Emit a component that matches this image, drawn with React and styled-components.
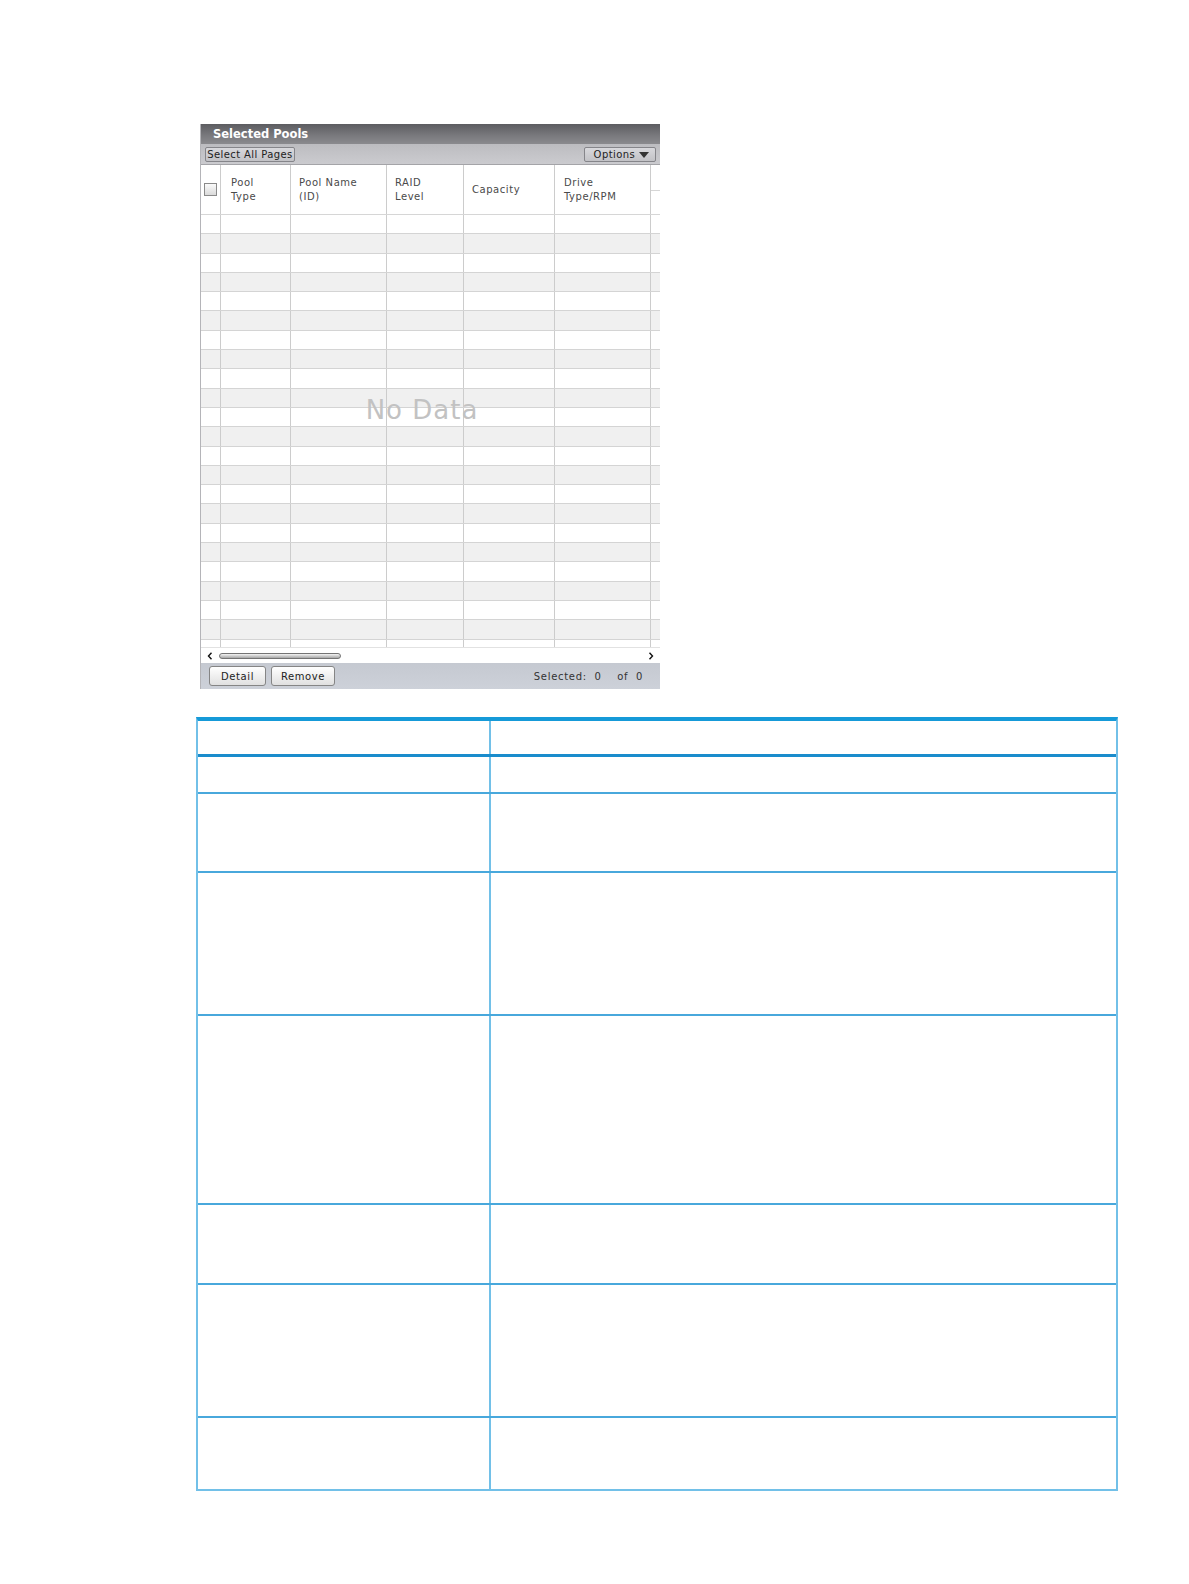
import React from "react";
import styled, { createGlobalStyle } from "styled-components";

const Global = createGlobalStyle`
  html, body { margin: 0; padding: 0; background: #ffffff; }
  body { font-family: "DejaVu Sans", Verdana, sans-serif; }
`;

const Page = styled.div`
  padding-top: 124px;
  padding-bottom: 40px;
  display: flex;
  flex-direction: column;
`;

const Panel = styled.div`
  margin-left: 200px;
  width: 460px;
  display: flex;
  flex-direction: column;
  border-left: 1px solid #b4b4b8;
  box-sizing: border-box;
`;

const TitleBar = styled.div`
  height: 20px;
  background: linear-gradient(#5c5c60, #78787c 55%, #8a8a8e);
  color: #ffffff;
  font-family: "DejaVu Sans", Verdana, sans-serif;
  font-weight: bold;
  font-size: 11.5px;
  display: flex;
  align-items: center;
  padding-left: 12px;
  white-space: nowrap;
`;

const Toolbar = styled.div`
  height: 21px;
  background: linear-gradient(#bcbcc0, #cbcbcf);
  display: flex;
  align-items: center;
  justify-content: space-between;
  padding: 0 4px 0 4px;
  border-bottom: 1px solid #a4a4a8;
  box-sizing: border-box;
`;

const ToolButton = styled.div`
  height: 15px;
  padding: 0 ${(p) => p.$pad ?? 1}px;
  border: 1px solid #85858a;
  border-radius: 2px;
  background: linear-gradient(#d8d8dc, #c2c2c6);
  font-size: 10px;
  color: #222;
  display: flex;
  align-items: center;
  gap: 3px;
  letter-spacing: 0.4px;
  white-space: nowrap;
  width: ${(p) => (p.$w ? p.$w + "px" : "auto")};
  box-sizing: border-box;
  justify-content: ${(p) => p.$justify || "center"};
`;

const Caret = styled.span`
  width: 0;
  height: 0;
  border-left: 5.5px solid transparent;
  border-right: 5.5px solid transparent;
  border-top: 6px solid #333;
  margin-top: 1px;
  margin-left: 1px;
`;

const COLS = "20px 70px 96px 77px 91px 96px 1fr";

const HeadRow = styled.div`
  display: grid;
  grid-template-columns: ${COLS};
  height: 50px;
  background: #ffffff;
  border-bottom: 1px solid #d6d6d6;
  box-sizing: border-box;
`;

const HeadCell = styled.div`
  border-right: 1px solid #cccccc;
  display: flex;
  align-items: center;
  padding-left: ${(p) => p.$pl ?? 9}px;
  justify-content: ${(p) => (p.$center ? "center" : "flex-start")};
  font-size: 10px;
  line-height: 14px;
  color: #4a4a4a;
  letter-spacing: 0.55px;
  white-space: nowrap;
  &:last-child { border-right: none; }
`;

const HeadSplit = styled.div`
  align-self: flex-start;
  width: 100%;
  height: 26px;
  border-bottom: 1px solid #d6d6d6;
  box-sizing: border-box;
`;

const Check = styled.div`
  width: 13px;
  height: 13px;
  border: 1px solid #8a8a8a;
  background: linear-gradient(#fbfbfb, #dadada);
  box-sizing: border-box;
`;

const Body = styled.div`
  position: relative;
  height: 432px;
  overflow: hidden;
`;

const Row = styled.div`
  display: grid;
  grid-template-columns: ${COLS};
  height: 19.3px;
  background: ${(p) => (p.$alt ? "#f0f0f0" : "#ffffff")};
  border-bottom: 1px solid #d4d4d4;
  box-sizing: border-box;
`;

const Cell = styled.div`
  border-right: 1px solid #cccccc;
  &:last-child { border-right: none; }
`;

const NoData = styled.div`
  position: absolute;
  left: 0;
  right: 17px;
  top: 180px;
  text-align: center;
  font-family: "DejaVu Sans", Verdana, sans-serif;
  font-size: 26px;
  line-height: 30px;
  color: #c2c2c2;
  letter-spacing: 1px;
  pointer-events: none;
`;

const ScrollRow = styled.div`
  height: 16px;
  background: #ffffff;
  display: flex;
  align-items: center;
  padding: 0 6px 0 6px;
  gap: 6px;
  border-top: 1px solid #e2e2e2;
  box-sizing: border-box;
`;

const Thumb = styled.div`
  width: 122px;
  height: 6px;
  border: 1px solid #747474;
  border-radius: 3px;
  background: linear-gradient(#f4f4f4, #a6a6a6);
  box-sizing: border-box;
`;

const Spacer = styled.div`
  flex: 1;
`;

const Footer = styled.div`
  height: 26px;
  background: linear-gradient(#c5c9d1, #cdd1d9);
  display: flex;
  align-items: center;
  padding: 0 17px 0 8px;
  gap: 5px;
  box-sizing: border-box;
`;

const FootButton = styled.div`
  height: 20px;
  width: ${(p) => p.$w}px;
  border: 1px solid #858585;
  border-radius: 3px;
  background: linear-gradient(#ffffff, #e0e0e0);
  font-size: 10px;
  color: #222;
  display: flex;
  align-items: center;
  justify-content: center;
  box-sizing: border-box;
  letter-spacing: 0.6px;
`;

const Status = styled.div`
  font-size: 10px;
  color: #333;
  letter-spacing: 0.7px;
  white-space: pre;
`;

const DocTable = styled.div`
  margin-left: 196px;
  margin-top: 28px;
  width: 922px;
  border-top: 4px solid #169ad8;
  border-left: 2px solid #72c0e8;
  border-right: 2px solid #72c0e8;
  border-bottom: 2px solid #72c0e8;
  box-sizing: border-box;
  display: flex;
  flex-direction: column;
`;

const DocRow = styled.div`
  display: grid;
  grid-template-columns: 293px 1fr;
  height: ${(p) => p.$h}px;
  border-bottom: ${(p) => (p.$head ? "3px solid #1a8ccc" : "2px solid #48a8dc")};
  box-sizing: border-box;
  &:last-child { border-bottom: none; }
`;

const DocCell = styled.div`
  border-right: 2px solid #72c0e8;
  &:last-child { border-right: none; }
`;

const Chevron = ({ dir }) => (
  <svg width="6" height="8" viewBox="0 0 6 8">
    <path
      d={dir === "left" ? "M4.5 0.8 L1.5 4 L4.5 7.2" : "M1.5 0.8 L4.5 4 L1.5 7.2"}
      fill="none"
      stroke="#111"
      strokeWidth="1.4"
    />
  </svg>
);

const headers = [
  { lines: ["Pool", "Type"], pl: 10 },
  { lines: ["Pool Name", "(ID)"], pl: 8 },
  { lines: ["RAID", "Level"], pl: 8 },
  { lines: ["Capacity"], pl: 8 },
  { lines: ["Drive", "Type/RPM"], pl: 9 },
];

const docRows = [36, 37, 79, 143, 189, 80, 133, 71];

export default function App() {
  const rows = Array.from({ length: 23 }, (_, i) => i);
  return (
    <Page>
      <Global />
      <Panel>
        <TitleBar>Selected Pools</TitleBar>
        <Toolbar>
          <ToolButton $w={90}>Select All Pages</ToolButton>
          <ToolButton $w={72} $justify="flex-end" $pad={6}>
            Options <Caret />
          </ToolButton>
        </Toolbar>
        <HeadRow>
          <HeadCell $center $pl={0}>
            <Check />
          </HeadCell>
          {headers.map((h) => (
            <HeadCell key={h.lines.join()} $pl={h.pl}>
              <div>
                {h.lines.map((l) => (
                  <div key={l}>{l}</div>
                ))}
              </div>
            </HeadCell>
          ))}
          <HeadCell $pl={0}>
            <HeadSplit />
          </HeadCell>
        </HeadRow>
        <Body>
          {rows.map((i) => (
            <Row key={i} $alt={i % 2 === 1}>
              {Array.from({ length: 7 }, (_, c) => (
                <Cell key={c} />
              ))}
            </Row>
          ))}
          <NoData>No Data</NoData>
        </Body>
        <ScrollRow>
          <Chevron dir="left" />
          <Thumb />
          <Spacer />
          <Chevron dir="right" />
        </ScrollRow>
        <Footer>
          <FootButton $w={57}>Detail</FootButton>
          <FootButton $w={64}>Remove</FootButton>
          <Spacer />
          <Status>{"Selected:  0    of  0"}</Status>
        </Footer>
      </Panel>
      <DocTable>
        {docRows.map((h, i) => (
          <DocRow key={i} $h={h} $head={i === 0}>
            <DocCell />
            <DocCell />
          </DocRow>
        ))}
      </DocTable>
    </Page>
  );
}
